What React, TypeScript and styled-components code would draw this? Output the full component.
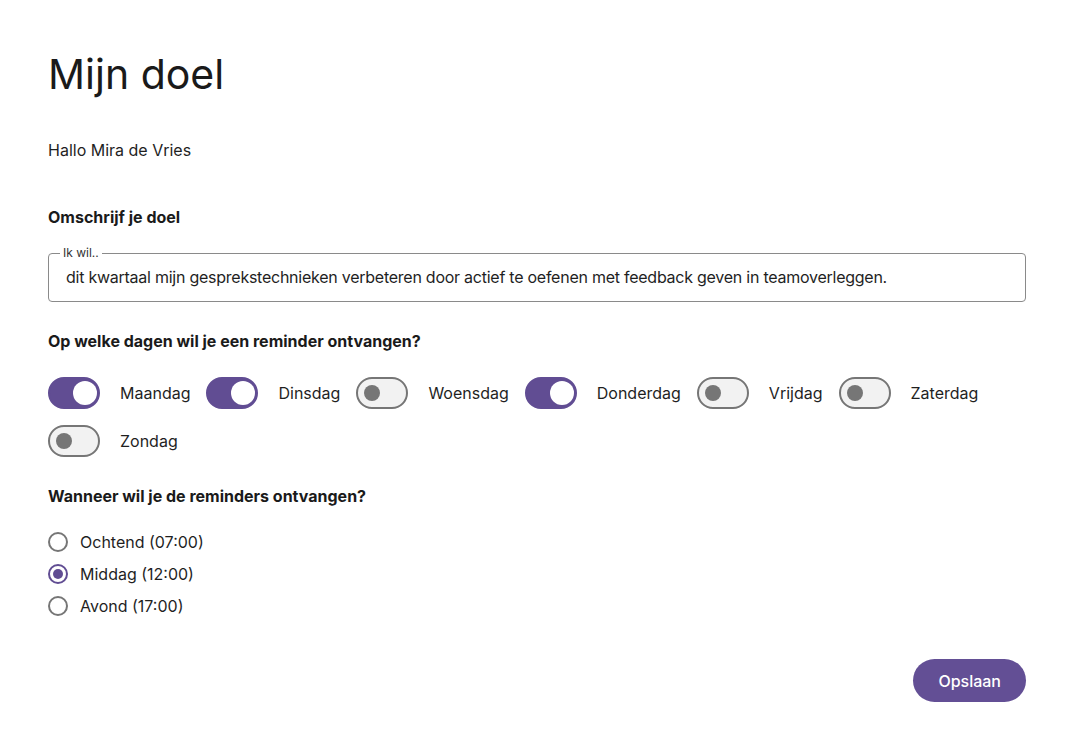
import React, { useState } from "react";
import { styled, createGlobalStyle } from "styled-components";

const GlobalStyle = createGlobalStyle`
	body {
		margin: 0;
		background: #ffffff;
		color: #1f1f1f;
		font-family: Inter, "Noto Sans", sans-serif;
	}
`;

const DAYS = ["Maandag", "Dinsdag", "Woensdag", "Donderdag", "Vrijdag", "Zaterdag", "Zondag"];
const TIMES = ["Ochtend (07:00)", "Middag (12:00)", "Avond (17:00)"];

const App: React.FC = () => {
	const [days, setDays] = useState<Record<string, boolean>>({
		Maandag: true,
		Dinsdag: true,
		Donderdag: true,
	});
	const [time, setTime] = useState("Middag (12:00)");

	return (
		<Page>
			<GlobalStyle />
			<Title>Mijn doel</Title>
			<Greeting>Hallo Mira de Vries</Greeting>

			<SectionLabel $gap={43}>Omschrijf je doel</SectionLabel>
			<Field>
				<Legend>Ik wil..</Legend>
				<GoalInput defaultValue="dit kwartaal mijn gesprekstechnieken verbeteren door actief te oefenen met feedback geven in teamoverleggen." />
			</Field>

			<SectionLabel $gap={27}>Op welke dagen wil je een reminder ontvangen?</SectionLabel>
			<DayList>
				{DAYS.map((day) => (
					<DayItem key={day}>
						<Toggle
							$on={!!days[day]}
							onClick={() => setDays({ ...days, [day]: !days[day] })}
							aria-label={day}
						>
							<Knob $on={!!days[day]} />
						</Toggle>
						<DayName>{day}</DayName>
					</DayItem>
				))}
			</DayList>

			<SectionLabel $gap={27}>Wanneer wil je de reminders ontvangen?</SectionLabel>
			<RadioList>
				{TIMES.map((t) => (
					<RadioRow key={t} onClick={() => setTime(t)}>
						<RadioCircle $checked={time === t} />
						<span>{t}</span>
					</RadioRow>
				))}
			</RadioList>

			<Actions>
				<SaveButton>Opslaan</SaveButton>
			</Actions>
		</Page>
	);
};

export default App;

const Page = styled.div`
	padding: 48px;
	display: flex;
	flex-direction: column;
`;

const Title = styled.h1`
	margin: 0;
	font-size: 41px;
	line-height: 52px;
	font-weight: 400;
	color: #1a1a1a;
`;

const Greeting = styled.p`
	margin: 38px 0 0;
	font-size: 16px;
	line-height: 24px;
`;

const SectionLabel = styled.h2<{ $gap: number }>`
	margin: ${(p) => p.$gap}px 0 0;
	font-size: 16px;
	line-height: 24px;
	font-weight: 700;
	color: #1a1a1a;
`;

const Field = styled.fieldset`
	margin: 17px 0 0;
	padding: 0 17px 12px;
	border: 1px solid #8a8a8a;
	border-radius: 4px;
	min-width: 0;
`;

const Legend = styled.legend`
	font-size: 12px;
	line-height: 14px;
	padding: 0 3px;
	margin-left: -6px;
	color: #333;
`;

const GoalInput = styled.input`
	display: block;
	width: 100%;
	height: 24px;
	margin-top: 5px;
	box-sizing: border-box;
	border: none;
	outline: none;
	padding: 0;
	font-family: inherit;
	font-size: 16px;
	line-height: 24px;
	letter-spacing: -0.25px;
	color: #1f1f1f;
	background: transparent;
`;

const DayList = styled.div`
	display: flex;
	flex-wrap: wrap;
	gap: 16px;
	margin-top: 24px;
`;

const DayItem = styled.label`
	display: flex;
	align-items: center;
	gap: 20px;
	cursor: pointer;
`;

const Toggle = styled.button<{ $on: boolean }>`
	position: relative;
	width: 52px;
	height: 32px;
	padding: 0;
	border-radius: 16px;
	box-sizing: border-box;
	border: 2px solid ${(p) => (p.$on ? "#614d93" : "#767676")};
	background: ${(p) => (p.$on ? "#614d93" : "#f2f2f2")};
	cursor: pointer;
`;

const Knob = styled.span<{ $on: boolean }>`
	position: absolute;
	top: 50%;
	transform: translateY(-50%);
	border-radius: 50%;
	${(p) =>
		p.$on
			? `right: 1px; width: 24px; height: 24px; background: #ffffff;`
			: `left: 6px; width: 16px; height: 16px; background: #767676;`}
`;

const DayName = styled.span`
	font-size: 16px;
	line-height: 24px;
`;

const RadioList = styled.div`
	display: flex;
	flex-direction: column;
	gap: 8px;
	margin-top: 22px;
`;

const RadioRow = styled.label`
	display: flex;
	align-items: center;
	gap: 12px;
	font-size: 16px;
	line-height: 24px;
	cursor: pointer;
`;

const RadioCircle = styled.span<{ $checked: boolean }>`
	width: 20px;
	height: 20px;
	box-sizing: border-box;
	border-radius: 50%;
	border: 2px solid ${(p) => (p.$checked ? "#614d93" : "#767676")};
	display: flex;
	align-items: center;
	justify-content: center;

	&::after {
		content: "";
		width: 10px;
		height: 10px;
		border-radius: 50%;
		background: ${(p) => (p.$checked ? "#614d93" : "transparent")};
	}
`;

const Actions = styled.div`
	display: flex;
	justify-content: flex-end;
	margin-top: 41px;
`;

const SaveButton = styled.button`
	height: 43px;
	padding: 0 25px;
	border: none;
	border-radius: 22px;
	background: #634f95;
	color: #ffffff;
	font-family: inherit;
	font-size: 16px;
	font-weight: 500;
	cursor: pointer;
`;
